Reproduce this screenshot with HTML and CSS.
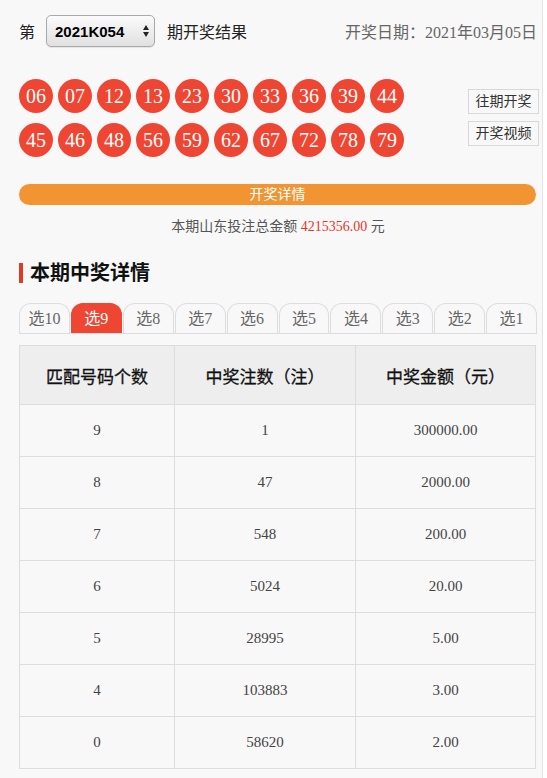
FILE: index.html
```html
<!DOCTYPE html>
<html lang="zh-CN">
<head>
    <meta charset="UTF-8">
    <meta name="viewport" content="width=device-width, initial-scale=1.0">
    <title>开奖结果</title>
    <link rel="stylesheet" href="styles.css">
</head>
<body>
    <div class="page">
        <!-- 期号 + 开奖日期 -->
        <div class="top">
            <span class="label">第</span>
            <div class="issue-wrap">
                <select class="issue">
                    <option>2021K054</option>
                </select>
            </div>
            <span class="label">期开奖结果</span>
            <span class="date">开奖日期：2021年03月05日</span>
        </div>

        <!-- 开奖号码 -->
        <div class="draw">
            <div class="balls">
                <span class="ball">06</span><span class="ball">07</span><span class="ball">12</span><span class="ball">13</span><span class="ball">23</span>
                <span class="ball">30</span><span class="ball">33</span><span class="ball">36</span><span class="ball">39</span><span class="ball">44</span>
                <span class="ball">45</span><span class="ball">46</span><span class="ball">48</span><span class="ball">56</span><span class="ball">59</span>
                <span class="ball">62</span><span class="ball">67</span><span class="ball">72</span><span class="ball">78</span><span class="ball">79</span>
            </div>
            <div class="links">
                <a class="link-btn">往期开奖</a>
                <a class="link-btn">开奖视频</a>
            </div>
        </div>

        <div class="detail-bar">开奖详情</div>
        <p class="total">本期山东投注总金额 <span class="money">4215356.00</span> 元</p>

        <h2 class="title">本期中奖详情</h2>

        <!-- 玩法切换 -->
        <ul class="tabs">
            <li>选10</li>
            <li class="active">选9</li>
            <li>选8</li>
            <li>选7</li>
            <li>选6</li>
            <li>选5</li>
            <li>选4</li>
            <li>选3</li>
            <li>选2</li>
            <li>选1</li>
        </ul>

        <table class="prize">
            <thead>
                <tr><th>匹配号码个数</th><th>中奖注数（注）</th><th>中奖金额（元）</th></tr>
            </thead>
            <tbody>
                <tr><td>9</td><td>1</td><td>300000.00</td></tr>
                <tr><td>8</td><td>47</td><td>2000.00</td></tr>
                <tr><td>7</td><td>548</td><td>200.00</td></tr>
                <tr><td>6</td><td>5024</td><td>20.00</td></tr>
                <tr><td>5</td><td>28995</td><td>5.00</td></tr>
                <tr><td>4</td><td>103883</td><td>3.00</td></tr>
                <tr><td>0</td><td>58620</td><td>2.00</td></tr>
            </tbody>
        </table>
    </div>
</body>
</html>
```

FILE: styles.css
```css
/* 页面基础 */
body {
    margin: 0;
    background-color: #ffffff;
    font-family: "Liberation Serif", "Noto Sans CJK SC", serif;
    color: #333;
}

.page {
    width: 518px;
    padding: 15px 5px 10px 19px;
    background-color: #f8f8f8;
    border-right: 1px solid #e4e4e4;
    min-height: 753px;
}

/* 顶部：期号选择 */
.top {
    display: flex;
    align-items: center;
    height: 32px;
    font-size: 16px;
}

.label {
    color: #222;
}

.issue-wrap {
    position: relative;
    margin: 0 12px 0 11px;
}

/* 上下箭头 */
.issue-wrap::before,
.issue-wrap::after {
    content: "";
    position: absolute;
    right: 6px;
    border-left: 3px solid transparent;
    border-right: 3px solid transparent;
    pointer-events: none;
}

.issue-wrap::before {
    top: 10px;
    border-bottom: 5px solid #222;
}

.issue-wrap::after {
    top: 17px;
    border-top: 5px solid #222;
}

.issue {
    -webkit-appearance: none;
    appearance: none;
    display: block;
    width: 109px;
    height: 32px;
    padding: 0 8px;
    font-family: "Liberation Sans", Arial, sans-serif;
    font-size: 15px;
    font-weight: bold;
    color: #000;
    border: 1px solid #a9a9a9;
    border-radius: 5px;
    background: linear-gradient(#fbfbfb, #e0e0e0);
    box-shadow: 0 1px 1px rgba(0, 0, 0, 0.08);
}

.date {
    margin-left: auto;
    color: #666;
    font-size: 16px;
}

/* 开奖号码 */
.draw {
    display: flex;
    margin-top: 32px;
}

.balls {
    display: grid;
    grid-template-columns: repeat(10, 34px);
    gap: 10px 5px;
}

.ball {
    width: 34px;
    height: 34px;
    border-radius: 50%;
    background-color: #ee4632;
    color: #fff;
    font-size: 20px;
    line-height: 34px;
    text-align: center;
}

.links {
    display: flex;
    flex-direction: column;
    gap: 7px;
    margin: 10px -2px 0 auto;
}

.link-btn {
    width: 69px;
    height: 23px;
    border: 1px solid #d8d8d8;
    background-color: #f8f8f8;
    font-size: 14px;
    line-height: 23px;
    text-align: center;
    color: #333;
}

/* 开奖详情条 */
.detail-bar {
    margin-top: 27px;
    width: 517px;
    height: 21px;
    border-radius: 11px;
    background-color: #f39433;
    color: #fff;
    font-size: 14px;
    line-height: 21px;
    text-align: center;
}

.total {
    margin: 10px 0 0;
    text-align: center;
    font-size: 14px;
    color: #555;
}

.money {
    color: #e8352a;
}

/* 小标题 */
.title {
    margin: 28px 0 0;
    padding-left: 7px;
    border-left: 4px solid #de3a25;
    font-size: 20px;
    line-height: 20px;
    color: #111;
}

/* 玩法标签 */
.tabs {
    display: flex;
    margin: 20px 0 0;
    padding: 0;
    list-style: none;
    border-bottom: 1px solid #dddddd;
}

.tabs li {
    flex: 1;
    height: 29px;
    line-height: 29px;
    text-align: center;
    font-size: 16px;
    color: #666;
    border: 1px solid #dddddd;
    border-bottom: none;
    border-radius: 12px 12px 0 0;
    margin-right: 1px;
}

.tabs li:last-child {
    margin-right: 0;
}

.tabs li.active {
    background-color: #ee4632;
    border-color: #ee4632;
    color: #fff;
}

/* 中奖表格 */
.prize {
    margin-top: 11px;
    width: 517px;
    border-collapse: collapse;
    text-align: center;
}

.prize th,
.prize td {
    border: 1px solid #dddddd;
    padding: 0;
}

.prize th {
    height: 58px;
    background-color: #eeeeee;
    font-size: 17px;
    font-weight: normal;
    color: #111;
    -webkit-text-stroke: 0.3px #111;
}

.prize th:nth-child(1) { width: 154px; }
.prize th:nth-child(2) { width: 180px; }

.prize td {
    height: 51px;
    font-size: 15px;
    color: #444;
}
```
